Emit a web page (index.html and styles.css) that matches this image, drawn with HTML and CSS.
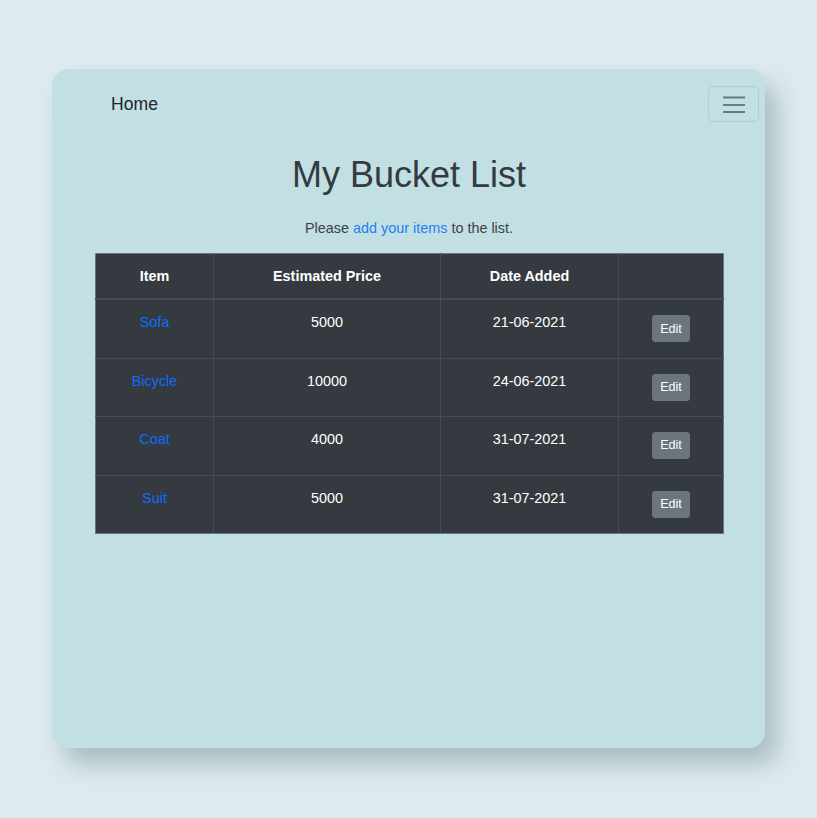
FILE: index.html
```html
<!DOCTYPE html>
<html lang="en">
<head>
<meta charset="utf-8">
<title>My Bucket List</title>
<link rel="stylesheet" href="styles.css">
</head>
<body>
<div class="card">
  <nav class="navbar">
    <a class="brand" href="#">Home</a>
    <button class="toggler" type="button" aria-label="Toggle navigation">
      <svg width="22" height="18" viewBox="0 0 22 18"><path d="M0 2.5h22M0 10h22M0 17h22" stroke="rgba(0,0,0,0.45)" stroke-width="2"/></svg>
    </button>
  </nav>
  <main class="content">
    <h1 class="title">My Bucket List</h1>
    <p class="lead">Please <a href="#">add your items</a> to the list.</p>
    <table class="items">
      <colgroup>
        <col class="c1"><col class="c2"><col class="c3"><col class="c4">
      </colgroup>
      <thead>
        <tr><th>Item</th><th>Estimated Price</th><th>Date Added</th><th></th></tr>
      </thead>
      <tbody>
        <tr><td><a href="#">Sofa</a></td><td>5000</td><td>21-06-2021</td><td><button class="edit">Edit</button></td></tr>
        <tr><td><a href="#">Bicycle</a></td><td>10000</td><td>24-06-2021</td><td><button class="edit">Edit</button></td></tr>
        <tr><td><a href="#">Coat</a></td><td>4000</td><td>31-07-2021</td><td><button class="edit">Edit</button></td></tr>
        <tr><td><a href="#">Suit</a></td><td>5000</td><td>31-07-2021</td><td><button class="edit">Edit</button></td></tr>
      </tbody>
    </table>
  </main>
</div>
</body>
</html>
```
FILE: styles.css
```css
html, body { margin: 0; padding: 0; }
body {
  background: #dcebef;
  font-family: "Liberation Sans", Arial, sans-serif;
  color: #343a40;
  padding: 69px 52px 70px 52px;
}
.card {
  background: #c2dfe3;
  border-radius: 16px;
  height: 679px;
  box-shadow: 12px 16px 24px rgba(40, 70, 80, 0.28);
}
.navbar {
  display: flex;
  justify-content: space-between;
  align-items: center;
  padding: 17px 6px 0 59px;
}
.brand {
  font-size: 17.6px;
  color: #212529;
  text-decoration: none;
  line-height: 1.5;
}
.toggler {
  width: 51px;
  height: 36px;
  display: flex;
  align-items: center;
  justify-content: center;
  background: transparent;
  border: 1px solid rgba(0, 0, 0, 0.08);
  border-radius: 5px;
  padding: 0;
}
.content {
  padding: 31px 42px 0 43px;
}
.title {
  margin: 0;
  text-align: center;
  font-size: 36px;
  font-weight: 400;
  line-height: 1.2;
  color: #343a40;
}
.lead {
  margin: 22px 0 13px;
  text-align: center;
  font-size: 14.4px;
  line-height: 1.5;
  color: #3b4248;
}
.lead a { color: #1f7ff5; text-decoration: none; }
.items {
  width: 100%;
  table-layout: fixed;
  border-collapse: collapse;
  background: #343a40;
  color: #fff;
  font-size: 14.4px;
  border: 1px solid #6c757d;
}
.c1 { width: 118px; }
.c2 { width: 227px; }
.c3 { width: 178px; }
.c4 { width: 105px; }
.items th, .items td {
  border: 1px solid #454d55;
  padding: 12px;
  line-height: 1.5;
  text-align: center;
  vertical-align: top;
}
.items th { font-weight: 700; border-bottom-width: 2px; padding: 12px 12px 11px; }
.items thead tr th { border-top-color: #6c757d; }
.items tr > :first-child { border-left-color: #6c757d; }
.items tr > :last-child { border-right-color: #6c757d; }
.items tbody tr:last-child td { border-bottom-color: #6c757d; }
.items td { height: 33.4px; }
.items td a { color: #0d6efd; text-decoration: none; }
.edit {
  margin-top: 3px;
  height: 27px;
  padding: 0 7px;
  background: #6c757d;
  color: #fff;
  border: 1px solid #6c757d;
  border-radius: 3px;
  font-family: "Liberation Sans", Arial, sans-serif;
  font-size: 12.6px;
  line-height: 1;
}
```
